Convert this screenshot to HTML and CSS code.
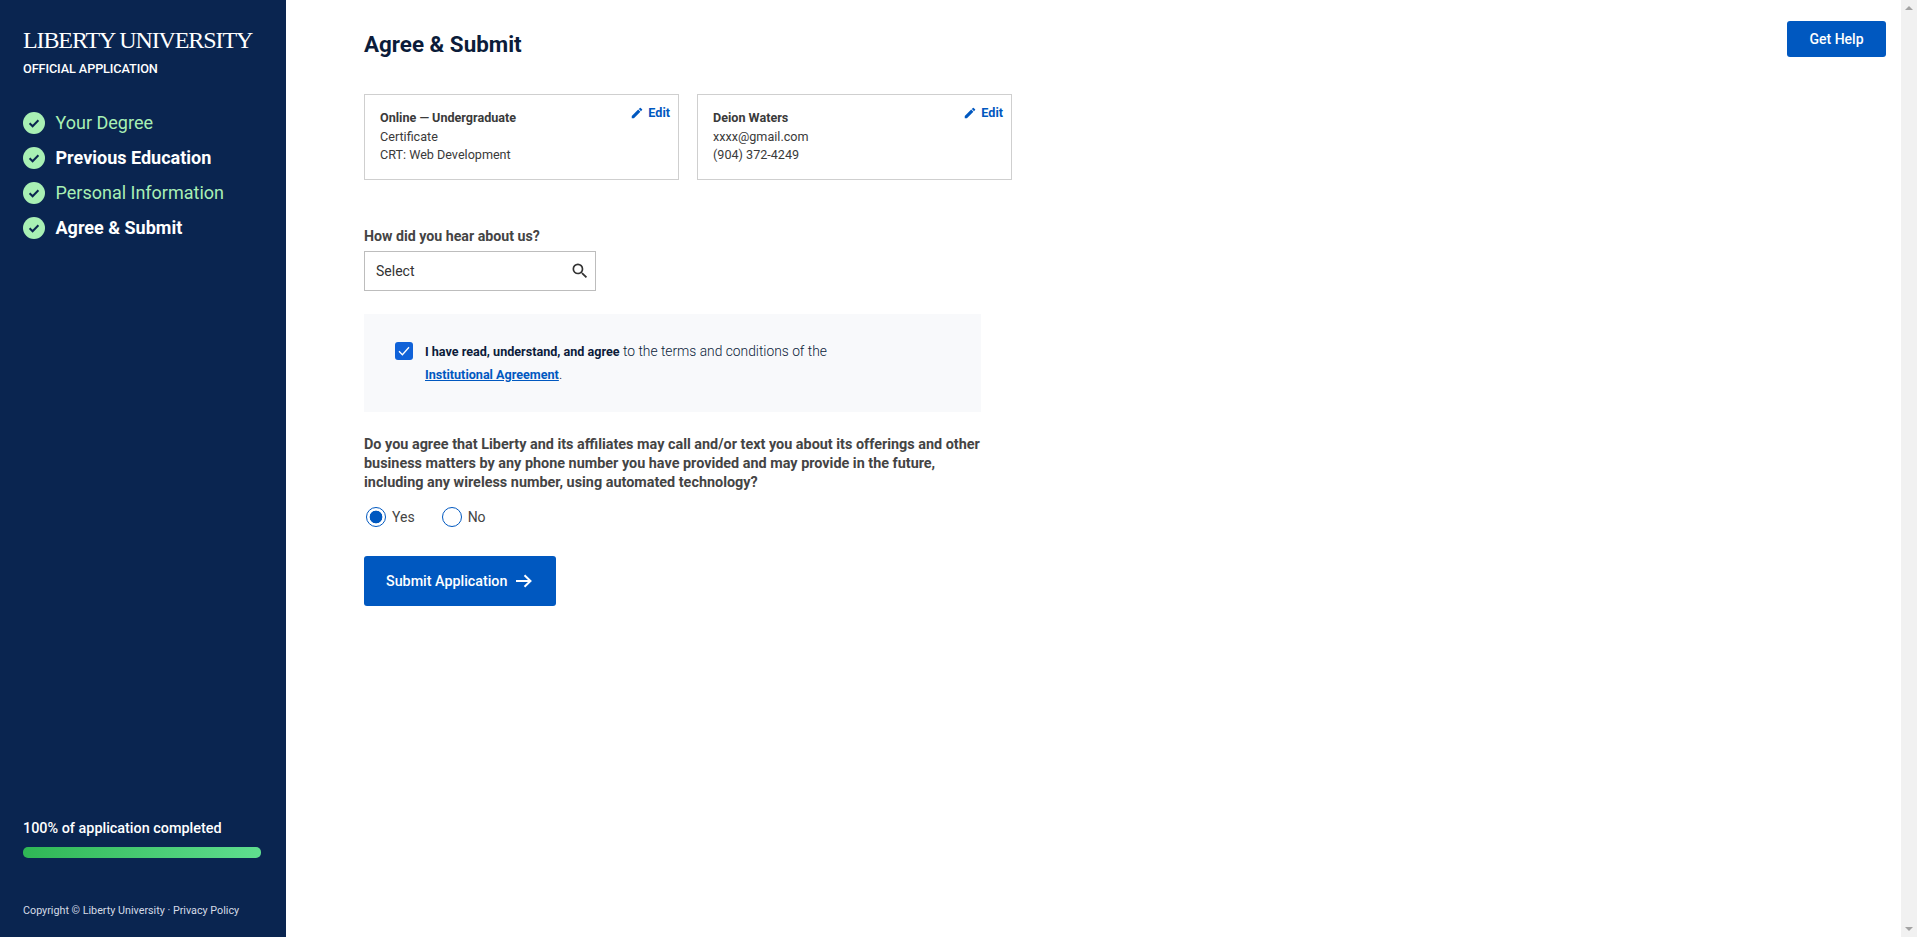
FILE: index.html
```html
<!DOCTYPE html>
<html lang="en">
<head>
<meta charset="utf-8">
<title>Agree &amp; Submit</title>
<link rel="stylesheet" href="styles.css">
</head>
<body>
<div class="app">
  <aside class="sidebar">
    <div class="brand">LIBERTY UNIVERSITY</div>
    <div class="sub">OFFICIAL APPLICATION</div>
    <ul class="steps">
      <li class="step done"><svg class="tick" viewBox="0 0 22 22"><circle cx="11" cy="11" r="11" fill="#a8f0b4"/><path d="M6.6 11.2l3 3 5.8-6" fill="none" stroke="#0a2550" stroke-width="2"/></svg>Your Degree</li>
      <li class="step strong"><svg class="tick" viewBox="0 0 22 22"><circle cx="11" cy="11" r="11" fill="#a8f0b4"/><path d="M6.6 11.2l3 3 5.8-6" fill="none" stroke="#0a2550" stroke-width="2"/></svg>Previous Education</li>
      <li class="step done"><svg class="tick" viewBox="0 0 22 22"><circle cx="11" cy="11" r="11" fill="#a8f0b4"/><path d="M6.6 11.2l3 3 5.8-6" fill="none" stroke="#0a2550" stroke-width="2"/></svg>Personal Information</li>
      <li class="step strong"><svg class="tick" viewBox="0 0 22 22"><circle cx="11" cy="11" r="11" fill="#a8f0b4"/><path d="M6.6 11.2l3 3 5.8-6" fill="none" stroke="#0a2550" stroke-width="2"/></svg>Agree &amp; Submit</li>
    </ul>
    <div class="progress">
      <div class="progress-label">100% of application completed</div>
      <div class="progress-bar"></div>
    </div>
    <div class="copy">Copyright © Liberty University · Privacy Policy</div>
  </aside>
  <main class="main">
    <div class="content">
      <h1 class="title">Agree &amp; Submit</h1>
      <div class="cards">
        <section class="card">
          <a class="edit"><svg class="pencil" viewBox="0 0 24 24"><path d="M3 17.25V21h3.75L17.81 9.94l-3.75-3.75L3 17.25zM20.71 7.04a1 1 0 0 0 0-1.41l-2.34-2.34a1 1 0 0 0-1.41 0l-1.83 1.83 3.75 3.75 1.83-1.83z"/></svg>Edit</a>
          <div class="card-head">Online — Undergraduate</div>
          <div class="card-line">Certificate</div>
          <div class="card-line">CRT: Web Development</div>
        </section>
        <section class="card">
          <a class="edit"><svg class="pencil" viewBox="0 0 24 24"><path d="M3 17.25V21h3.75L17.81 9.94l-3.75-3.75L3 17.25zM20.71 7.04a1 1 0 0 0 0-1.41l-2.34-2.34a1 1 0 0 0-1.41 0l-1.83 1.83 3.75 3.75 1.83-1.83z"/></svg>Edit</a>
          <div class="card-head">Deion Waters</div>
          <div class="card-line">xxxx@gmail.com</div>
          <div class="card-line">(904) 372-4249</div>
        </section>
      </div>
      <label class="field-label">How did you hear about us?</label>
      <div class="select">Select
        <svg class="search" viewBox="0 0 24 24"><path d="M15.5 14h-.79l-.28-.27A6.47 6.47 0 0 0 16 9.5 6.5 6.5 0 1 0 9.5 16c1.61 0 3.09-.59 4.23-1.57l.27.28v.79l5 4.99L20.49 19l-4.99-5zm-6 0C7.01 14 5 11.99 5 9.5S7.01 5 9.5 5 14 7.01 14 9.5 11.99 14 9.5 14z"/></svg>
      </div>
      <div class="agree">
        <span class="checkbox"><svg viewBox="0 0 18 18"><path d="M4 9.2l3.4 3.6L14 5.2" fill="none" stroke="#fff" stroke-width="1.3"/></svg></span>
        <p class="agree-text"><b>I have read, understand, and agree</b> to the terms and conditions of the<br><a class="link">Institutional Agreement</a>.</p>
      </div>
      <p class="question">Do you agree that Liberty and its affiliates may call and/or text you about its offerings and other business matters by any phone number you have provided and may provide in the future, including any wireless number, using automated technology?</p>
      <div class="radios">
        <span class="radio-item"><span class="radio on"></span>Yes</span>
        <span class="radio-item"><span class="radio"></span>No</span>
      </div>
      <a class="submit">Submit Application<svg class="arrow" viewBox="0 0 16 14"><path d="M0 7h14M8.5 1.2L14.5 7l-6 5.8" fill="none" stroke="#fff" stroke-width="2"/></svg></a>
    </div>
    <a class="help">Get Help</a>
  </main>
  <div class="scrollbar"><span class="arrow-up"></span><span class="arrow-down"></span></div>
</div>
</body>
</html>
```
FILE: styles.css
```css
* { box-sizing: border-box; }
html, body { margin: 0; height: 100%; overflow: hidden; }
body { font-family: Roboto, "Liberation Sans", sans-serif; color: #3a3a3a; background: #fff; }
.app { display: flex; height: 937px; }

.sidebar { width: 286px; flex: none; background: #0a2550; color: #fff; padding: 27px 23px 0; display: flex; flex-direction: column; }
.brand { font-family: "Liberation Serif", serif; font-size: 24px; line-height: 26px; letter-spacing: -1.1px; white-space: nowrap; }
.sub { margin-top: 9px; font-size: 12.7px; line-height: 14px; font-weight: 500; letter-spacing: -0.1px; }
.steps { list-style: none; margin: 29px 0 0; padding: 0; display: flex; flex-direction: column; }
.step { display: flex; align-items: center; gap: 10.5px; height: 35px; font-size: 18px; white-space: nowrap; }
.step.done { color: #a8f0b4; }
.step.strong { font-weight: 700; color: #fff; }
.tick { width: 22px; height: 22px; flex: none; }
.progress { margin-top: auto; }
.progress-label { font-size: 14.4px; line-height: 18px; font-weight: 500; }
.progress-bar { margin-top: 9px; width: 238px; height: 11px; border-radius: 5px; background: linear-gradient(90deg, #2fb755, #5fde8f); }
.copy { margin-top: 46px; margin-bottom: 20px; font-size: 10.75px; line-height: 13px; color: #d5dbe6; white-space: nowrap; }

.main { flex: 1; display: flex; justify-content: space-between; align-items: flex-start; padding: 21px 15px 0 78px; min-width: 0; }
.content { width: 660px; }
.title { margin: 9px 0 0; font-size: 22.4px; line-height: 28px; font-weight: 700; color: #0b1c3a; }
.cards { display: flex; gap: 18px; margin-top: 36px; }
.card { position: relative; width: 315px; height: 86px; border: 1px solid #cfcfcf; padding: 14px 15px 0; font-size: 12.6px; line-height: 18px; color: #3a3a3a; }
.card-head { font-weight: 700; margin-bottom: 1px; }
.edit { position: absolute; top: 9px; right: 8px; display: flex; align-items: center; gap: 4px; font-size: 12.6px; line-height: 17px; font-weight: 700; color: #0058c0; }
.pencil { width: 14px; height: 14px; fill: #0058c0; }
.field-label { display: block; margin-top: 46px; font-size: 14.2px; line-height: 20px; font-weight: 700; color: #444; }
.select { display: flex; align-items: center; justify-content: space-between; margin-top: 5px; width: 232px; height: 40px; border: 1px solid #bdbdbd; padding: 0 5px 0 11px; font-size: 14px; color: #333; }
.search { width: 20px; height: 20px; fill: #333; }
.agree { display: flex; gap: 12px; margin-top: 23px; width: 617px; height: 98px; background: #f8f9fb; padding: 28px 31px 0; }
.checkbox { width: 18px; height: 18px; flex: none; border-radius: 3px; background: #1062d8; display: block; }
.checkbox svg { display: block; }
.agree-text { margin: 0; font-size: 13.8px; line-height: 23px; font-weight: 300; color: #0b1c3a; margin-top: -2px; }
.agree-text b { font-size: 12.6px; font-weight: 700; }
.link { font-size: 12.6px; font-weight: 700; color: #0058c0; text-decoration: underline; }
.question { margin: 23px 0 0; width: 617px; font-size: 14.4px; line-height: 19px; font-weight: 700; color: #444; }
.radios { display: flex; gap: 25px; margin-top: 15px; }
.radio-item { display: flex; align-items: center; gap: 6px; font-size: 14px; height: 20px; color: #444; }
.radio { width: 20px; height: 20px; border: 1.5px solid #0058c0; border-radius: 50%; margin-left: 2px; background: #fff; }
.radio.on { background: radial-gradient(circle, #0058c0 0 6px, #fff 6.7px); }
.submit { display: inline-flex; align-items: center; gap: 9px; margin-top: 29px; height: 50px; width: 192px; padding-left: 22px; background: #0058c0; border-radius: 3px; color: #fff; font-size: 14.3px; font-weight: 500; }
.arrow { width: 16px; height: 14px; }
.help { display: flex; align-items: center; justify-content: center; width: 99px; height: 36px; background: #0058c0; border-radius: 3px; color: #fff; font-size: 14px; font-weight: 500; }

.scrollbar { width: 16px; flex: none; background: #f1f1f1; display: flex; flex-direction: column; justify-content: space-between; align-items: center; padding: 6px 0; }
.arrow-up { width: 0; height: 0; border-left: 4px solid transparent; border-right: 4px solid transparent; border-bottom: 4px solid #a3a3a3; }
.arrow-down { width: 0; height: 0; border-left: 4px solid transparent; border-right: 4px solid transparent; border-top: 4px solid #a3a3a3; }
```
